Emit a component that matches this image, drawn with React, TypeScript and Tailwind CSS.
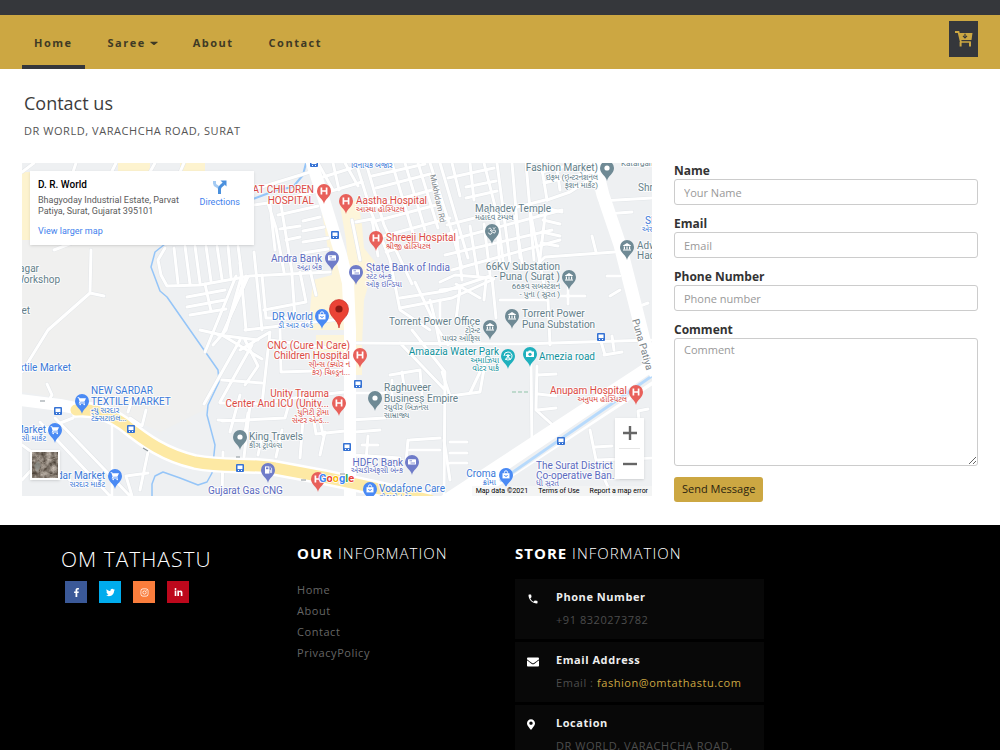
import React from "react";
import { FaCaretDown, FaEnvelope, FaFacebookF, FaInstagram, FaLinkedinIn, FaMapMarkerAlt, FaTwitter } from "react-icons/fa";
import { MdPhone } from "react-icons/md";

const RED = "#db4a43";
const SLATE = "#64808a";
const BLUE = "#3b7ad9";
const INDIGO = "#5c6bc0";
const TEAL = "#12929c";

type PinKind = "hospital" | "place" | "bank" | "building" | "cart" | "bag" | "temple" | "fuel" | "park" | "camera";

const pinColors: Record<PinKind, string> = {
  hospital: "#e8605a",
  place: "#6f8a95",
  bank: "#6f7cc9",
  building: "#6f8a95",
  cart: "#4a8af4",
  bag: "#4a8af4",
  temple: "#6f8a95",
  fuel: "#6f7cc9",
  park: "#1fb0bd",
  camera: "#1fb0bd",
};

const pins: { kind: PinKind; x: number; y: number }[] = [
  { kind: "hospital", x: 324, y: 191 },
  { kind: "hospital", x: 346, y: 201 },
  { kind: "hospital", x: 376, y: 238 },
  { kind: "hospital", x: 360, y: 355 },
  { kind: "hospital", x: 339, y: 403 },
  { kind: "hospital", x: 636, y: 392 },
  { kind: "hospital", x: 318, y: 479 },
  { kind: "bank", x: 332, y: 258 },
  { kind: "bank", x: 356, y: 272 },
  { kind: "bank", x: 412, y: 462 },
  { kind: "place", x: 607, y: 168 },
  { kind: "place", x: 375, y: 398 },
  { kind: "place", x: 240, y: 437 },
  { kind: "temple", x: 492, y: 231 },
  { kind: "building", x: 569, y: 277 },
  { kind: "building", x: 512, y: 316 },
  { kind: "building", x: 490, y: 327 },
  { kind: "building", x: 627, y: 247 },
  { kind: "park", x: 508, y: 356 },
  { kind: "camera", x: 530, y: 354 },
  { kind: "cart", x: 82, y: 401 },
  { kind: "cart", x: 55, y: 430 },
  { kind: "cart", x: 115, y: 476 },
  { kind: "bag", x: 322, y: 316 },
  { kind: "bag", x: 506, y: 475 },
  { kind: "bag", x: 370, y: 489 },
  { kind: "fuel", x: 268, y: 470 },
];

type MapLabel = {
  x: number;
  y: number;
  text: string;
  color: string;
  end?: boolean;
  small?: boolean;
};

const labels: MapLabel[] = [
  { x: 314, y: 193, text: "SURAT CHILDREN", color: RED, end: true },
  { x: 314, y: 204, text: "HOSPITAL", color: RED, end: true },
  { x: 356, y: 204, text: "Aastha Hospital", color: RED },
  { x: 356, y: 212, text: "આસ્થા હોસ્પિટલ", color: RED, small: true },
  { x: 386, y: 241, text: "Shreeji Hospital", color: RED },
  { x: 386, y: 249, text: "શ્રીજી હોસ્પિટલ", color: RED, small: true },
  { x: 322, y: 262, text: "Andra Bank", color: INDIGO, end: true },
  { x: 322, y: 270, text: "અંદ્રા બેંક", color: INDIGO, end: true, small: true },
  { x: 366, y: 271, text: "State Bank of India", color: INDIGO },
  { x: 366, y: 279, text: "સ્ટેટ બેન્ક", color: INDIGO, small: true },
  { x: 366, y: 287, text: "ઓફ ઇન્ડિયા", color: INDIGO, small: true },
  { x: 313, y: 320, text: "DR World", color: BLUE, end: true },
  { x: 313, y: 328, text: "ડી આર વર્લ્ડ", color: BLUE, end: true, small: true },
  { x: 351, y: 168, text: "વિનાયક બજાર", color: BLUE, small: true },
  { x: 350, y: 349, text: "CNC (Cure N Care)", color: RED, end: true },
  { x: 350, y: 359, text: "Children Hospital", color: RED, end: true },
  { x: 350, y: 367, text: "સીન્સ (ક્યોર ન", color: RED, end: true, small: true },
  { x: 350, y: 375, text: "કેર) ચિલ્ડ્રન...", color: RED, end: true, small: true },
  { x: 329, y: 397, text: "Unity Trauma", color: RED, end: true },
  { x: 329, y: 407, text: "Center And ICU (Unity...", color: RED, end: true },
  { x: 329, y: 415, text: "યુનિટી ટ્રોમા", color: RED, end: true, small: true },
  { x: 329, y: 423, text: "સેન્ટર એન્ડ...", color: RED, end: true, small: true },
  { x: 384, y: 391, text: "Raghuveer", color: SLATE },
  { x: 384, y: 402, text: "Business Empire", color: SLATE },
  { x: 384, y: 410, text: "રઘુવીર બિઝનેસ", color: SLATE, small: true },
  { x: 384, y: 418, text: "સામ્રાજ્ય", color: SLATE, small: true },
  { x: 249, y: 440, text: "King Travels", color: SLATE },
  { x: 249, y: 448, text: "કીંગ ટ્રાવેલ્સ", color: SLATE, small: true },
  { x: 403, y: 466, text: "HDFC Bank", color: INDIGO, end: true },
  { x: 403, y: 473, text: "એચડીએફસી બેન્ક", color: INDIGO, end: true, small: true },
  { x: 208, y: 494, text: "Gujarat Gas CNG", color: INDIGO },
  { x: 379, y: 492, text: "Vodafone Care", color: BLUE },
  { x: 379, y: 500, text: "વોડાફોન કેર", color: BLUE, small: true },
  { x: 598, y: 171, text: "Fashion Market)", color: SLATE, end: true },
  { x: 598, y: 180, text: "ઇફમ (ઇન્ટરનેશનલ", color: SLATE, end: true, small: true },
  { x: 598, y: 188, text: "ફેશન માર્કેટ)", color: SLATE, end: true, small: true },
  { x: 621, y: 166, text: "Katargam", color: SLATE, small: true },
  { x: 475, y: 212, text: "Mahadev Temple", color: SLATE },
  { x: 475, y: 220, text: "મહાદેવ ટેમ્પલ", color: SLATE, small: true },
  { x: 638, y: 191, text: "Shree", color: SLATE },
  { x: 645, y: 224, text: "SBI", color: BLUE },
  { x: 642, y: 232, text: "એસબી", color: BLUE, small: true },
  { x: 637, y: 249, text: "Adwait", color: SLATE },
  { x: 637, y: 259, text: "Hades", color: SLATE },
  { x: 560, y: 270, text: "66KV Substation", color: SLATE, end: true },
  { x: 560, y: 280, text: "- Puna ( Surat )", color: SLATE, end: true },
  { x: 560, y: 289, text: "66કવ સબસ્ટેશન", color: SLATE, end: true, small: true },
  { x: 560, y: 297, text: "- પુના ( સુરત )", color: SLATE, end: true, small: true },
  { x: 522, y: 317, text: "Torrent Power", color: SLATE },
  { x: 522, y: 328, text: "Puna Substation", color: SLATE },
  { x: 480, y: 325, text: "Torrent Power Office", color: SLATE, end: true },
  { x: 480, y: 333, text: "ટોરેન્ટ", color: SLATE, end: true, small: true },
  { x: 480, y: 341, text: "પાવર ઓફિસ", color: SLATE, end: true, small: true },
  { x: 499, y: 355, text: "Amaazia Water Park", color: TEAL, end: true },
  { x: 499, y: 363, text: "અમાઝિયા", color: TEAL, end: true, small: true },
  { x: 499, y: 371, text: "વોટર પાર્ક", color: TEAL, end: true, small: true },
  { x: 539, y: 360, text: "Amezia road", color: TEAL },
  { x: 627, y: 394, text: "Anupam Hospital", color: RED, end: true },
  { x: 627, y: 402, text: "અનુપમ હોસ્પિટલ", color: RED, end: true, small: true },
  { x: 496, y: 477, text: "Croma", color: BLUE, end: true },
  { x: 496, y: 485, text: "ક્રોમા", color: BLUE, end: true, small: true },
  { x: 536, y: 469, text: "The Surat District", color: INDIGO },
  { x: 536, y: 479, text: "Co-operative Ban...", color: INDIGO },
  { x: 536, y: 486, text: "ધી સુરત", color: INDIGO, small: true },
  { x: 91, y: 394, text: "NEW SARDAR", color: BLUE },
  { x: 91, y: 405, text: "TEXTILE MARKET", color: BLUE },
  { x: 91, y: 413, text: "ન્યુ સરદાર", color: BLUE, small: true },
  { x: 91, y: 421, text: "ટેક્સટાઇલ...", color: BLUE, small: true },
  { x: 71, y: 371, text: "Textile Market", color: BLUE, end: true },
  { x: 46, y: 433, text: "Market", color: BLUE, end: true },
  { x: 46, y: 441, text: "સી માર્કેટ", color: BLUE, end: true, small: true },
  { x: 105, y: 479, text: "Sardar Market", color: BLUE, end: true },
  { x: 105, y: 487, text: "સરદાર માર્કેટ", color: BLUE, end: true, small: true },
  { x: 39, y: 272, text: "Nagar", color: SLATE, end: true },
  { x: 60, y: 283, text: "Workshop", color: SLATE, end: true },
  { x: 30, y: 314, text: "Market", color: SLATE, end: true },
];

// Side streets, drawn in one pass with a grey casing under them
const streets = [
  // west
  "M22 372 L48 330 L90 293 L91 250 M54 250 L90 236 M90 293 L104 296",
  "M22 172 L34 163 M72 175 L76 163 M110 175 L116 163 M150 172 L155 163 M180 172 L184 163",
  "M165 248 L158 260 L161 275 L167 286 L200 285 L250 276 L330 272",
  "M174 248 L178 283 M185 246 L190 284 M195 246 L200 283 M206 246 L211 281 M217 246 L222 279 M228 246 L231 277 M238 246 L242 276",
  "M187 297 L225 290 M187 307 L225 300 M190 315 L226 309 M205 284 L211 311 M241 278 L226 330 L213 345",
  "M236 276 L205 352 M248 277 L222 335 L262 359 M222 335 L200 330",
  // between the river and the main road
  "M254 205 L268 203 L276 228 L284 272 M270 204 L275 250 M280 199 L292 272",
  "M255 189 L320 169 M268 203 L318 191 M278 215 L318 206 M303 221 L320 217 M303 231 L324 227 M303 242 L328 238 M303 253 L328 249 M286 240 L300 237 M280 229 L300 226",
  "M240 263 L246 330 M254 252 L262 330 M246 276 L233 310 M262 275 L266 318 L295 318 L292 275 M310 270 L316 295 M300 272 L306 302 L264 310",
  "M245 330 L350 318 M240 350 L270 332 L262 404 L220 403 M270 340 L330 348 M280 330 L281 372 L345 370 M222 380 L262 383 M204 404 L240 340",
  "M262 404 L300 397 L345 392 M240 395 L230 432 M248 413 L244 440 M222 421 L285 418 M285 418 L290 400 M310 396 L316 434 L345 431",
  "M320 420 L323 435 M303 420 L300 458 M282 430 L276 457 M262 436 L258 455 M325 432 L320 455 M250 405 L244 457 M223 452 L222 496",
  // south west
  "M47 384 L52 395 L47 403 M22 438 L73 418 M22 445 L70 480 M40 422 L110 496 M55 418 L130 496 M22 480 L48 452 M112 425 L112 496 M148 452 L140 490 M126 476 L148 473 M126 476 L132 496 M130 418 L142 426 L146 410 M128 412 L132 400",
  "M218 335 L258 340 M220 402 L252 345 M218 420 L244 421 M245 340 L258 366 L245 385",
  // north east grid
  "M318 163 L333 190 M333 163 L339 190 M345 163 L358 186 M356 163 L372 214 L390 260 L400 310 L430 330",
  "M366 163 L384 225 L412 284 M320 178 L352 168 M328 192 L362 182 M366 208 L432 190 M372 222 L440 204 M380 237 L450 218 M386 252 L455 232",
  "M372 176 L425 164 M376 188 L430 174 M352 220 L360 260 M356 222 L372 219 L378 256",
  "M430 163 L452 232 L462 268 M440 163 L468 258 M405 163 L425 230 M418 163 L438 228 M392 163 L415 240",
  "M452 163 L460 196 M470 163 L474 200 M484 163 L496 210 L500 270 M497 163 L510 262 M512 163 L520 258 M526 163 L530 210 L545 290 M541 163 L547 200 M556 163 L560 190",
  "M448 178 L494 168 M466 187 L496 181 M466 198 L497 191 M450 240 L562 210 M445 255 L552 230 M452 270 L560 240 M447 225 L545 200 M542 172 L575 164 M544 183 L600 170",
  "M456 230 L462 280 M470 226 L478 276 M484 224 L490 274 M498 220 L504 268 M515 216 L522 262 M530 214 L534 260 M546 208 L540 258",
  "M545 208 L562 212 M543 220 L560 224 M542 232 L560 236 M541 243 L558 246",
  "M547 200 L570 192 L592 178 M600 201 L652 198 M605 214 L632 212 M592 236 L596 252 M545 257 L615 252 M531 270 L545 257 M607 276 L620 276 M610 296 L620 290 M632 309 L648 303 M560 296 L585 296 M568 285 L568 304",
  // east
  "M400 298 L445 291 L490 276 M400 308 L452 298 L494 279 M415 282 L436 326 L448 345",
  "M440 282 L455 275 L492 278 L496 318 M440 290 L460 288 L456 320 M456 284 L480 298 M440 300 L440 325 M486 280 L484 300 M500 300 L548 300 L550 345",
  "M430 300 L435 320 L440 345 M355 343 L520 344 L652 340 M400 343 L445 390 M412 330 L445 372 L444 496",
  "M390 375 L420 370 M392 380 L392 400 L420 402 M420 370 L422 395 M402 372 L404 386 M350 393 L386 393",
  "M350 420 L385 418 M355 432 L380 430 M368 436 L366 460 M362 445 L378 445 M352 455 L400 458 M410 440 L440 438 M410 450 L440 450 M408 440 L406 462",
  "M442 372 L450 396 L480 392 L487 352 M450 442 L467 442 M450 453 L467 453 M450 463 L467 463 M444 440 L450 480 M470 393 L480 372",
  "M531 364 L532 448 M537 366 L536 410 L556 428 M537 375 L556 374 M538 394 L556 396 M537 410 L556 408",
  "M600 338 L605 355 M612 336 L614 350 M604 355 L622 352 M590 430 L596 460 L612 496 M595 447 L612 446 M596 460 L652 458 M648 409 L638 411 L640 430",
];

const stops = [
  [335, 235], [314, 163], [358, 384], [347, 447], [240, 468], [131, 429], [58, 411], [601, 337], [561, 441],
];

const PinGlyph = ({ kind }: { kind: PinKind }) => {
  switch (kind) {
    case "hospital":
      return <path d="M-2.6 -3.6V3.6M2.6 -3.6V3.6M-2.6 0H2.6" stroke="#fff" strokeWidth="1.7" fill="none" />;
    case "place":
      return <circle r="2.6" fill="#fff" />;
    case "bank":
      return (
        <>
          <rect x="-4" y="-2.7" width="8" height="5.2" rx="0.6" fill="#fff" />
          <path d="M-2.5 -1.2H0M-1.5 1H3" stroke="#6f7cc9" strokeWidth="0.8" />
        </>
      );
    case "building":
      return (
        <path
          d="M-4 -1.6L0 -4L4 -1.6V-1H-4ZM-3.2 -0.5H-2V2.2H-3.2ZM-0.6 -0.5H0.6V2.2H-0.6ZM2 -0.5H3.2V2.2H2ZM-4 2.6H4V3.6H-4Z"
          fill="#fff"
        />
      );
    case "cart":
      return (
        <g fill="#fff">
          <path d="M-4.4 -3.8H-2.8L-2.4 -2.8H4L2.4 0.8H-1.4L-2 1.6H3V2.4H-3.4L-2.4 0.4L-3.6 -2.9H-4.4Z" />
          <circle cx="-1.8" cy="3.5" r="0.8" />
          <circle cx="2.2" cy="3.5" r="0.8" />
        </g>
      );
    case "bag":
      return (
        <>
          <path d="M-3.5 -1.8H3.5V3.4H-3.5Z" fill="#fff" />
          <path d="M-1.6 -1.8V-2.6A1.6 1.6 0 0 1 1.6 -2.6V-1.8" stroke="#fff" fill="none" strokeWidth="0.9" />
          <path d="M-1.4 0A1.4 1.4 0 0 0 1.4 0" stroke="#4a8af4" fill="none" strokeWidth="0.9" />
        </>
      );
    case "temple":
      return (
        <path
          d="M-3.5 -2.2C-1 -4 0.5 -1 -1.8 -0.4C1.4 0 0 3.6 -2 3.2C-3 3 -3.4 2.4 -3.6 1.6M-0.6 0C1 0 1.4 -1.4 2.6 -1C4 -0.4 3.6 2 2.2 2C1.4 2 1 1.4 1 1M0.8 -3.2C1.6 -2.4 2.8 -2.6 3.4 -3.4"
          stroke="#fff"
          strokeWidth="1"
          fill="none"
        />
      );
    case "fuel":
      return (
        <>
          <path d="M-3 -3.6H1.4V3.6H-3Z" fill="#fff" />
          <path d="M-2 -2.6H0.4V-0.8H-2Z" fill="#6f7cc9" />
          <path d="M1.4 0.2H2.4V2.6H3.6V-1.8L2.4 -3" stroke="#fff" strokeWidth="0.8" fill="none" />
        </>
      );
    case "park":
      return (
        <path
          d="M0 -4A4 4 0 1 1 -2.6 3M-4 0A4 4 0 0 1 0 -4M0 -2V3M0 0L-2.6 3.8M0 0L2.6 3.8M-2.4 -0.6H2.4"
          stroke="#fff"
          strokeWidth="1"
          fill="none"
        />
      );
    case "camera":
      return (
        <>
          <path d="M-4 -2.4H-1.8L-1.2 -3.4H1.2L1.8 -2.4H4V3H-4Z" fill="#fff" />
          <circle r="1.6" cy="0.3" fill="#1fb0bd" />
        </>
      );
  }
};

const StreetMap = () => {
  return (
    <svg
      viewBox="22 163 630 333"
      preserveAspectRatio="xMidYMid slice"
      className="block h-[333px] w-full"
      role="img"
      aria-label="Map of D. R. World"
      fontFamily="Roboto, 'Noto Sans Gujarati', sans-serif"
    >
      <rect x="22" y="163" width="630" height="333" fill="#eef0f2" />
      <path d="M22 172L158 245L151 268L190 330L218 370L208 408L160 432L100 405L22 392Z" fill="#f0f0ef" />
      <path d="M22 172H30V240H22ZM118 163H150V172H118ZM180 163H205V172H180Z" fill="#fdf3cf" />
      <path
        d="M322 212L332 208L342 250L348 300L362 320V375H348V330H308L313 280L332 275ZM340 205L358 200L362 225L364 248L375 262L364 300L362 345H350V290L346 240ZM316 335H345V352H316Z"
        fill="#fdf5da"
      />

      <g fill="none" stroke="#95c5f8" strokeWidth="1.5" strokeLinejoin="round">
        <path d="M170 240L155 252L151 267L160 291L167 297L190 330L218 370L219 382L208 405L207 415L215 445L212 473L207 482L198 485L180 478L163 472L155 476L152 484V496" />
        <path d="M253 199L277 190L293 187L303 175L306 163" strokeWidth="2" />
      </g>

      <g fill="none" strokeLinejoin="round" strokeLinecap="round">
        {streets.map((d, i) => (
          <path key={i} d={d} stroke="#e2e5e8" strokeWidth="4" />
        ))}
        {streets.map((d, i) => (
          <path key={i} d={d} stroke="#fff" strokeWidth="3" />
        ))}
      </g>

      <g fill="none" strokeLinejoin="round">
        <path d="M447 506L664 364" stroke="#fff" strokeWidth="23" />
        <path d="M508 474L652 377" stroke="#eef0f2" strokeWidth="7" />
        <path d="M500 481L652 376" stroke="#b7dafc" strokeWidth="3" />
        <path d="M593 155L603 195L620 245L634 300L644 340L656 375" stroke="#fff" strokeWidth="13" />
        <path d="M311 160L325 203L341 255L348 283L350 330L350 500" stroke="#fff" strokeWidth="12" />
        <path d="M20 400L60 405L80 409" stroke="#fff" strokeWidth="12" />
        <path
          d="M72 410C95 408 110 414 124 424C145 441 165 455 195 462C225 468 250 463 275 468C310 474 340 480 375 488L430 500"
          stroke="#fff"
          strokeWidth="16"
        />
        <path
          d="M76 410C95 408 110 414 124 424C145 441 165 455 195 462C225 468 250 463 275 468C310 474 340 480 375 488L430 500"
          stroke="#fde9a4"
          strokeWidth="11"
          strokeLinecap="round"
        />
        <path d="M512 392H528" stroke="#8fc3a8" strokeDasharray="4 2" />
        <path d="M40 401H45M143 448L148 451M236 457H240M301 480H306M340 474H345" stroke="#8a9499" strokeWidth="1.2" />
      </g>

      {stops.map(([x, y]) => (
        <g key={`${x}-${y}`} transform={`translate(${x} ${y})`}>
          <rect x="-4" y="-4" width="8" height="8" rx="1" fill="#3572d4" />
          <rect x="-2.5" y="-2.5" width="5" height="3.6" fill="#fff" />
          <path d="M-2 2.5H-1M1 2.5H2" stroke="#fff" />
        </g>
      ))}

      {pins.map(({ kind, x, y }) => (
        <g key={`${x}-${y}`} transform={`translate(${x} ${y})`}>
          <path d="M0 13C-1 7.5 -7 6 -7 0A7 7 0 0 1 7 0C7 6 1 7.5 0 13Z" fill={pinColors[kind]} />
          <PinGlyph kind={kind} />
        </g>
      ))}

      <g stroke="#fff" strokeWidth="2" strokeOpacity="0.8" strokeLinejoin="round" paintOrder="stroke">
        {labels.map((l) => (
          <text
            key={`${l.x}-${l.y}`}
            x={l.x}
            y={l.y}
            fill={l.color}
            fontSize={l.small ? 8 : 10}
            textAnchor={l.end ? "end" : "start"}
          >
            {l.text}
          </text>
        ))}
        <text transform="translate(430 175) rotate(78)" fontSize="8" fill="#7b8489">Mukhidam Rd</text>
        <text transform="translate(632 320) rotate(74)" fontSize="10" fill="#7b8489">Puna Patiya</text>
      </g>

      <g transform="translate(339 310)">
        <path d="M0 18C-1 9 -9.5 8 -9.5 -1A9.5 9.5 0 0 1 9.5 -1C9.5 8 1 9 0 18Z" fill="#ea4335" stroke="#c5221f" strokeWidth="0.6" />
        <circle r="3.6" cy="-1" fill="#8b1a14" />
      </g>

      <text x="319" y="482" fontSize="11" fontWeight="700" stroke="#fff" strokeWidth="1.5" paintOrder="stroke">
        <tspan fill="#4285f4">G</tspan>
        <tspan fill="#ea4335">o</tspan>
        <tspan fill="#fbbc05">o</tspan>
        <tspan fill="#4285f4">g</tspan>
        <tspan fill="#34a853">l</tspan>
        <tspan fill="#ea4335">e</tspan>
      </text>
    </svg>
  );
};

const MapPanel = () => {
  return (
    <div className="relative min-w-0 flex-1 overflow-hidden font-[Roboto,sans-serif]">
      <StreetMap />

      <div className="absolute top-2 left-2 flex h-[74px] w-[224px] justify-between bg-white px-2 shadow">
        <div className="pt-2">
          <p className="text-[10px] leading-3 font-medium text-black">D. R. World</p>
          <p className="mt-1 w-[146px] text-[9px] leading-[11px] text-[#5b5b5b]">
            Bhagyoday Industrial Estate, Parvat Patiya, Surat, Gujarat 395101
          </p>
          <a href="#map" className="mt-2 block text-[9px] leading-3 text-[#427fed]">View larger map</a>
        </div>
        <a href="#directions" className="flex flex-col items-center pt-2 pr-1.5 text-[9px] text-[#427fed]">
          <svg viewBox="0 0 16 16" className="size-4" fill="none">
            <path d="M2.5 2V4.5C2.5 7.5 7 7 7.5 10" stroke="#a5cbf3" strokeWidth="3" />
            <path d="M7.5 15V10C7.5 7.5 9.5 6.5 12 4.5" stroke="#4a90dd" strokeWidth="3" />
            <path d="M8.5 1.5H14.5V7.5Z" fill="#4a90dd" />
          </svg>
          <span className="mt-px leading-3">Directions</span>
        </a>
      </div>

      <button
        aria-label="Show satellite imagery"
        className="absolute bottom-4 left-2 size-[30px] overflow-hidden border-2 border-white shadow"
      >
        <svg viewBox="0 0 26 26" className="size-full">
          <filter id="terrain" colorInterpolationFilters="sRGB">
            <feTurbulence type="fractalNoise" baseFrequency="0.2" numOctaves="4" seed="4" />
            <feColorMatrix values="0.7 0 0 0 0.18  0.7 0 0 0 0.14  0.7 0 0 0 0.1  0 0 0 0 1" />
          </filter>
          <rect width="26" height="26" filter="url(#terrain)" />
          <path d="M3 3L11 11L8 20L26 24M11 11L26 5" stroke="#a39a8e" strokeWidth="0.7" fill="none" />
          <path d="M2 13L6 9L9 14L5 20Z" fill="#8f918c" opacity="0.7" />
        </svg>
      </button>

      <div className="absolute right-2 bottom-[17px] flex w-[29px] flex-col bg-white text-[#666] shadow">
        <button aria-label="Zoom in" className="flex h-[30px] items-center justify-center">
          <svg viewBox="0 0 14 14" className="size-3.5">
            <path d="M7 0V14M0 7H14" stroke="currentColor" strokeWidth="2.4" />
          </svg>
        </button>
        <span className="mx-1 h-px bg-[#e6e6e6]" />
        <button aria-label="Zoom out" className="flex h-[30px] items-center justify-center">
          <svg viewBox="0 0 14 14" className="size-3.5">
            <path d="M0 7H14" stroke="currentColor" strokeWidth="2.4" />
          </svg>
        </button>
      </div>

      <div className="absolute right-0 bottom-0 flex gap-2.5 bg-[#f5f5f5]/70 px-1 text-[7px] leading-[10px] text-black">
        <span>Map data ©2021</span>
        <a href="#terms">Terms of Use</a>
        <a href="#report">Report a map error</a>
      </div>
    </div>
  );
};

const CartIcon = () => (
  <svg viewBox="0 0 18 16" className="h-4 w-[18px]" fill="none">
    <path d="M0 1H3.5L6 11.5" stroke="#cca742" strokeWidth="1.8" />
    <path d="M4 2H17.5L16.5 9H5.5Z" fill="#cca742" />
    <path d="M10 2.8V5.5M8 4.8L10 6.8L12 4.8" stroke="#35373b" strokeWidth="1.2" />
    <path d="M5 11H15.8" stroke="#cca742" strokeWidth="1.5" />
    <path d="M5.6 11V15.5M15 11V15.5" stroke="#cca742" strokeWidth="2" />
  </svg>
);

const navItems = ["Home", "Saree", "About", "Contact"];

const Header = () => {
  return (
    <header className="border-t-[15px] border-[#35373b] bg-[#cca742]">
      <div className="flex h-[54px] justify-between px-[22px]">
        <nav className="flex gap-[11px]">
          {navItems.map((item) => (
            <a
              key={item}
              href={`#${item.toLowerCase()}`}
              className={`flex items-center border-b-4 px-3 pt-1.5 text-[11px] font-bold tracking-[1.5px] text-[#3f3a25] ${
                item === "Home" ? "border-[#35373b]" : "border-transparent"
              }`}
            >
              {item}
              {item === "Saree" && <FaCaretDown className="ml-1 h-2.5 w-2" preserveAspectRatio="none" />}
            </a>
          ))}
        </nav>
        <button aria-label="Cart" className="mt-1.5 flex h-9 w-[29px] items-center justify-center bg-[#35373b]">
          <CartIcon />
        </button>
      </div>
    </header>
  );
};

const inputClass =
  "block w-full rounded-[3px] border border-[#ccc] bg-white px-[9px] text-[11px] text-[#555] placeholder:text-[#999]";

const Field = ({ id, label, children }: { id: string; label: string; children: React.ReactNode }) => (
  <div className="mb-[11px]">
    <label htmlFor={id} className="block text-[12px] leading-4 font-bold text-[#333]">
      {label}
    </label>
    {children}
  </div>
);

const ContactForm = () => {
  return (
    <form className="w-[304px] shrink-0" onSubmit={(e) => e.preventDefault()}>
      <Field id="name" label="Name">
        <input id="name" type="text" placeholder="Your Name" className={`${inputClass} h-[26px]`} />
      </Field>
      <Field id="email" label="Email">
        <input id="email" type="email" placeholder="Email" className={`${inputClass} h-[26px]`} />
      </Field>
      <Field id="phone" label="Phone Number">
        <input id="phone" type="tel" placeholder="Phone number" className={`${inputClass} h-[26px]`} />
      </Field>
      <Field id="comment" label="Comment">
        <textarea id="comment" placeholder="Comment" className={`${inputClass} h-32 resize-y py-[3px]`} />
      </Field>
      <button type="submit" className="block h-[25px] rounded-[3px] bg-[#cca742] px-2 text-[11px] text-[#2b2410]">
        Send Message
      </button>
    </form>
  );
};

const socials = [
  { name: "Facebook", icon: FaFacebookF, bg: "bg-[#3b5998]" },
  { name: "Twitter", icon: FaTwitter, bg: "bg-[#00aced]" },
  { name: "Instagram", icon: FaInstagram, bg: "bg-[#fa7d3c]" },
  { name: "LinkedIn", icon: FaLinkedinIn, bg: "bg-[#bd081c]" },
];

const StoreItem = ({ icon, title, children }: { icon: React.ReactNode; title: string; children: React.ReactNode }) => (
  <li className="flex h-[60px] bg-[#080808] pt-2.5 pl-3 text-[11px]">
    <span className="w-[29px] shrink-0 pt-1 text-white">{icon}</span>
    <div>
      <h4 className="leading-4 font-bold tracking-wider text-[#eee]">{title}</h4>
      <p className="mt-[7px] leading-4 tracking-wider text-[#4d4d4d]">{children}</p>
    </div>
  </li>
);

const Footer = () => {
  return (
    <footer className="grid grow grid-cols-[236fr_218fr_249fr_236fr] bg-black pt-5 pb-8 pl-[61px]">
      <div>
        <h2 className="text-[21px] leading-7 font-light tracking-[1px] text-white">OM TATHASTU</h2>
        <ul className="mt-2 ml-1 flex gap-3">
          {socials.map(({ name, icon: Icon, bg }) => (
            <li key={name}>
              <a
                href={`#${name.toLowerCase()}`}
                aria-label={name}
                className={`flex size-[22px] items-center justify-center text-white ${bg}`}
              >
                <Icon className="size-[9px]" />
              </a>
            </li>
          ))}
        </ul>
      </div>

      <div>
        <h3 className="text-[15px] leading-4 font-light tracking-[1px] text-white">
          <b className="font-bold">OUR</b> INFORMATION
        </h3>
        <ul className="mt-[18px] text-[11px] leading-[21px] tracking-wider text-[#666]">
          {["Home", "About", "Contact", "PrivacyPolicy"].map((link) => (
            <li key={link}>
              <a href={`#${link.toLowerCase()}`}>{link}</a>
            </li>
          ))}
        </ul>
      </div>

      <div>
        <h3 className="text-[15px] leading-4 font-light tracking-[1px] text-white">
          <b className="font-bold">STORE</b> INFORMATION
        </h3>
        <ul className="mt-[18px] flex flex-col gap-[3px]">
          <StoreItem icon={<MdPhone className="size-3" />} title="Phone Number">
            +91 8320273782
          </StoreItem>
          <StoreItem icon={<FaEnvelope className="size-3" />} title="Email Address">
            Email :{" "}
            <a href="mailto:fashion@omtathastu.com" className="text-[#cca742]">
              fashion@omtathastu.com
            </a>
          </StoreItem>
          <StoreItem icon={<FaMapMarkerAlt className="h-[11px] w-2" />} title="Location">
            DR WORLD, VARACHCHA ROAD,
          </StoreItem>
        </ul>
      </div>
    </footer>
  );
};

const App = () => {
  return (
    <div className="flex min-h-screen flex-col bg-white font-['Open_Sans',sans-serif]">
      <Header />
      <main className="px-[22px] pb-[23px]">
        <div className="px-0.5 pt-5">
          <h1 className="text-[18px] leading-7 text-[#3c3c3c]">Contact us</h1>
          <p className="mt-1.5 text-[11px] leading-4 tracking-wider text-[#555]">DR WORLD, VARACHCHA ROAD, SURAT</p>
        </div>
        <div className="mt-6 flex items-start gap-[22px]">
          <MapPanel />
          <ContactForm />
        </div>
      </main>
      <Footer />
    </div>
  );
};

export default App;
